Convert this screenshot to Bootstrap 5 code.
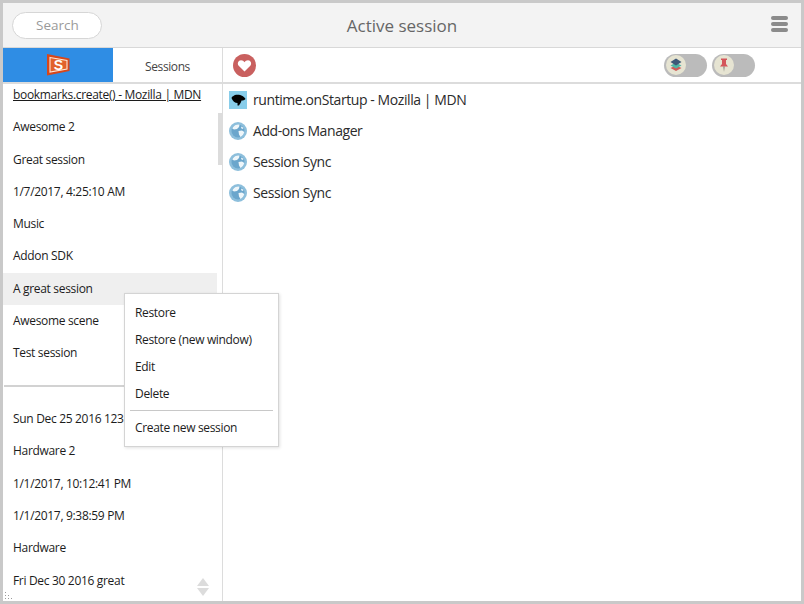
<!DOCTYPE html>
<html lang="en">
<head>
  <meta charset="UTF-8" />
  <title>Active session</title>
  <link href="https://cdn.jsdelivr.net/npm/bootstrap@5.3.0/dist/css/bootstrap.min.css" rel="stylesheet">
  <style>
    html, body { height: 100%; margin: 0; background: #fff; }
    body { font-family: "Open Sans", "Noto Sans", sans-serif; color: #1c1c1c; overflow: hidden; }
    .app-frame { width: 804px; height: 604px; padding: 3px; background: #fff; }
    .app-inner { height: 598px; outline: 3px solid #c9c9c9; position: relative; overflow: hidden; }
    .app-head { height: 45px; background: #f3f3f3; border-bottom: 1px solid #d8d8d8; padding: 0 9px; }
    .head-side { flex: 1 1 0; }
    .search-pill { width: 90px; height: 27px; border: 1px solid #d6d6d6; border-radius: 14px; background: #fff; color: #9a9a9a; font-size: 13.5px; line-height: 25px; padding-left: 23px; }
    .app-title { font-size: 17px; color: #666; padding-top: 2px; }
    .burger { width: 17px; margin: 0 4px 0 auto; }
    .burger i { display: block; height: 4px; border-radius: 2px; background: #8b8b8b; margin-bottom: 2px; }
    .tool-row { height: 36px; border-bottom: 2px solid #dcdcdc; }
    .tab-col { width: 220px; border-right: 1px solid #dcdcdc; }
    .tab-on { width: 110px; background: #2f8de4; }
    .tab-off { font-size: 12px; letter-spacing: -.4px; color: #444; padding-top: 3px; }
    .tool-bar { padding: 0 46px 0 10px; }
    .pill-toggle { width: 43px; height: 23px; border-radius: 12px; background: #bbb; padding: 1.5px; }
    .toggle-gap { gap: 5px; }
    .main-row { height: 517px; }
    .side-col { width: 220px; border-right: 1px solid #dcdcdc; position: relative; overflow: hidden; }
    .side-list { width: 214px; margin-top: -5px; }
    .sess-row { height: 32.3px; line-height: 32.3px; font-size: 12px; letter-spacing: -.32px; padding-left: 10px; white-space: nowrap; }
    .sess-hover { background: #efefef; }
    .sess-link { text-decoration: underline; }
    .sess-rule { height: 2px; background: #d2d2d2; margin: 15.5px 0 16px 1px; }
    .scroll-track { width: 4px; margin-left: 1px; }
    .scroll-thumb { height: 52px; margin-top: 29px; background: #dcdcdc; }
    .sort-arrows { position: absolute; left: 193px; top: 493px; }
    .resize-grip { position: absolute; left: 1px; bottom: 1px; }
    .tab-item { height: 31px; padding-left: 6px; font-size: 14px; letter-spacing: -.42px; gap: 6px; color: #2b2b2b; }
    .ctx-menu { position: absolute; left: 121px; top: 290px; width: 155px; height: 154px; background: #fff; border: 1px solid #d4d4d4; box-shadow: 1px 1px 3px rgba(0,0,0,.12); padding: 5px 5px 0; font-size: 12px; letter-spacing: -.33px; }
    .ctx-item { height: 27px; line-height: 27px; padding-left: 5px; }
    .ctx-rule { height: 1px; background: #c8c8c8; margin: 3px 0 3px; }
  </style>
</head>
<body>
  <div class="app-frame">
    <div class="app-inner">

      <!-- Header -->
      <div class="app-head d-flex align-items-center">
        <div class="head-side"><div class="search-pill">Search</div></div>
        <div class="app-title">Active session</div>
        <div class="head-side"><div class="burger"><i></i><i></i><i></i></div></div>
      </div>

      <!-- Tabs and toolbar -->
      <div class="tool-row d-flex">
        <div class="tab-col d-flex flex-shrink-0">
          <div class="tab-on d-flex align-items-center justify-content-center">
            <svg width="23" height="22" viewBox="0 0 23 22">
              <path d="M0 0 22.500 4.500V17L0 21.500Z" fill="#d8471a"/>
              <path d="M3 3.500 20 6.500V15L3 18Z" fill="#e2612c" stroke="#fde6d6" stroke-width="1.100"/>
              <text x="11.500" y="16" font-family="Liberation Sans, sans-serif" font-size="14" font-weight="700" fill="#fff" text-anchor="middle">S</text>
            </svg>
          </div>
          <div class="tab-off flex-grow-1 d-flex align-items-center justify-content-center">Sessions</div>
        </div>
        <div class="tool-bar flex-grow-1 d-flex align-items-center justify-content-between">
          <svg width="23" height="23" viewBox="0 0 23 23">
            <circle cx="11.500" cy="11.500" r="11.500" fill="#c9605f"/>
            <path d="M11.500 17.500 5.700 11.800C3.900 9.600 5.200 6.300 8 6.300 9.500 6.300 10.800 7.100 11.500 8.300 12.200 7.100 13.500 6.300 15 6.300 17.800 6.300 19.100 9.600 17.300 11.800Z" fill="#fff"/>
          </svg>
          <div class="d-flex toggle-gap">
            <div class="pill-toggle">
              <svg class="d-block" width="20" height="20" viewBox="0 0 20 20">
                <circle cx="10" cy="10" r="10" fill="#e6e4d2"/>
                <path d="M10 10.500 15.500 13 10 16 4.500 13Z" fill="#cf5a58"/>
                <path d="M10 7.500 15.500 10.500 10 13.500 4.500 10.500Z" fill="#4fb5a5"/>
                <path d="M10 3.500 15.500 7 10 10.500 4.500 7Z" fill="#3d5878"/>
              </svg>
            </div>
            <div class="pill-toggle">
              <svg class="d-block" width="20" height="20" viewBox="0 0 20 20">
                <circle cx="10" cy="10" r="10" fill="#e6e4d2"/>
                <path d="M7 3.500H13V5H12V9L14 11.500H6L8 9V5H7Z" fill="#d4555a"/>
                <path d="M9.500 11.500H10.500L10 17Z" fill="#555"/>
              </svg>
            </div>
          </div>
        </div>
      </div>

      <div class="main-row d-flex">
        <!-- Session list -->
        <div class="side-col d-flex flex-shrink-0">
          <div class="side-list">
            <div class="sess-row sess-link">bookmarks.create() - Mozilla | MDN</div>
            <div class="sess-row">Awesome 2</div>
            <div class="sess-row">Great session</div>
            <div class="sess-row">1/7/2017, 4:25:10 AM</div>
            <div class="sess-row">Music</div>
            <div class="sess-row">Addon SDK</div>
            <div class="sess-row sess-hover">A great session</div>
            <div class="sess-row">Awesome scene</div>
            <div class="sess-row">Test session</div>
            <div class="sess-rule"></div>
            <div class="sess-row">Sun Dec 25 2016 123</div>
            <div class="sess-row">Hardware 2</div>
            <div class="sess-row">1/1/2017, 10:12:41 PM</div>
            <div class="sess-row">1/1/2017, 9:38:59 PM</div>
            <div class="sess-row">Hardware</div>
            <div class="sess-row">Fri Dec 30 2016 great</div>
          </div>
          <div class="scroll-track"><div class="scroll-thumb"></div></div>
          <svg class="sort-arrows" width="14" height="20" viewBox="0 0 14 20">
            <path d="M7 1 13 9H1Z" fill="#dcdcdc"/>
            <path d="M1 11H13L7 19Z" fill="#dcdcdc"/>
          </svg>
          <svg class="resize-grip" width="9" height="9" viewBox="0 0 9 9" fill="#9a9a9a">
            <rect x="1" y="1" width="1" height="1"/><rect x="1" y="4" width="1" height="1"/><rect x="4" y="4" width="1" height="1"/>
            <rect x="1" y="7" width="1" height="1"/><rect x="4" y="7" width="1" height="1"/><rect x="7" y="7" width="1" height="1"/>
          </svg>
        </div>

        <!-- Tabs of the active session -->
        <div class="flex-grow-1">
          <div class="tab-item d-flex align-items-center">
            <svg width="18" height="18" viewBox="0 0 18 18">
              <rect width="18" height="18" fill="#88cdea"/>
              <path d="M2.500 7C3 5 5 5 6 4 8.500 3.300 11.500 3.800 13.500 5 15 5.800 16 7 16.500 8 15.500 9.500 14 9.500 12.500 9.500 12 11.500 11 13 10 14.500H8.500L8.500 12C6 12 3.500 10 2.500 7Z" fill="#000"/>
            </svg>
            <span>runtime.onStartup - Mozilla | MDN</span>
          </div>
          <div class="tab-item d-flex align-items-center">
            <svg width="18" height="18" viewBox="0 0 18 18"><use href="#globe"/></svg>
            <span>Add-ons Manager</span>
          </div>
          <div class="tab-item d-flex align-items-center">
            <svg width="18" height="18" viewBox="0 0 18 18"><use href="#globe"/></svg>
            <span>Session Sync</span>
          </div>
          <div class="tab-item d-flex align-items-center">
            <svg width="18" height="18" viewBox="0 0 18 18"><use href="#globe"/></svg>
            <span>Session Sync</span>
          </div>
        </div>
      </div>

      <!-- Context menu -->
      <div class="ctx-menu">
        <div class="ctx-item">Restore</div>
        <div class="ctx-item">Restore (new window)</div>
        <div class="ctx-item">Edit</div>
        <div class="ctx-item">Delete</div>
        <div class="ctx-rule"></div>
        <div class="ctx-item">Create new session</div>
      </div>
    </div>
  </div>

  <svg width="0" height="0" class="position-absolute">
    <defs>
      <g id="globe">
        <circle cx="9" cy="9" r="9" fill="#8dbfdc"/>
        <circle cx="9" cy="9" r="6.500" fill="#6ba6cc"/>
        <path d="M6.500 3C8 2.300 9.500 2.300 10.500 2.700L10 5 8 7 5 7.500 3.300 6.500C4 5 5 3.800 6.500 3ZM9.500 9 13 8.500 15.300 10C14.800 12 13.500 14 11.500 15L10 12.500Z" fill="#eef6fa"/>
        <path d="M12.500 4.500 14.500 6 13.500 7 12 6Z" fill="#eef6fa"/>
      </g>
    </defs>
  </svg>

  <script src="https://cdn.jsdelivr.net/npm/bootstrap@5.3.0/dist/js/bootstrap.bundle.min.js"></script>
</body>
</html>
